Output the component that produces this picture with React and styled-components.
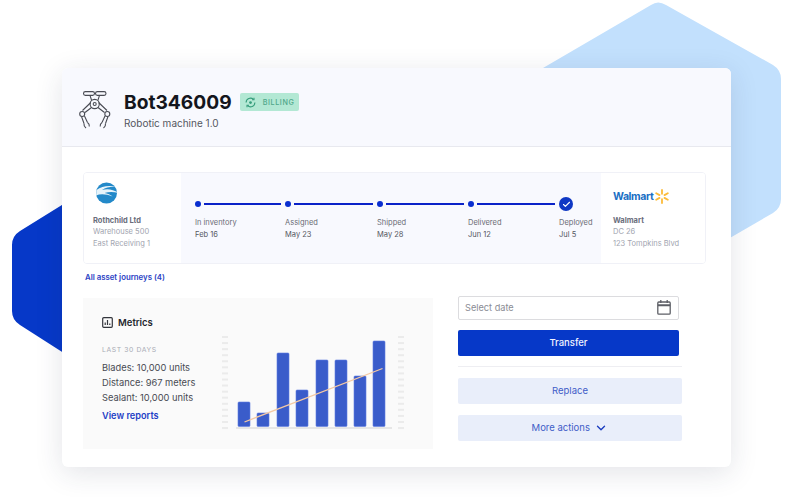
import React from "react";
import styled, { createGlobalStyle } from "styled-components";
import { Check, ChevronDown } from "lucide-react";

const GlobalStyle = createGlobalStyle`
  html, body { margin: 0; padding: 0; background: #fff; }
  body { font-family: Inter, "Liberation Sans", sans-serif; }
`;

const stops = [
  { label: "In inventory", date: "Feb 16" },
  { label: "Assigned", date: "May 23" },
  { label: "Shipped", date: "May 28" },
  { label: "Delivered", date: "Jun 12" },
  { label: "Deployed", date: "Jul 5", done: true },
];

const bars = [
  { x: 238, top: 402 },
  { x: 257, top: 413 },
  { x: 277, top: 353 },
  { x: 296, top: 390 },
  { x: 316, top: 360 },
  { x: 335, top: 360 },
  { x: 354, top: 376 },
  { x: 373, top: 341 },
];

const ticks = Array.from({ length: 16 }, (_, i) => 337 + i * 6.07);

function RobotIcon() {
  return (
    <RobotSvg width="32" height="38" viewBox="0 0 32 38" fill="none" stroke="#4a4c54" strokeWidth="1.1">
      <rect x="4.500" y=".6" width="11" height="3.800" rx="1.900" />
      <rect x="16.500" y=".6" width="10.500" height="3.800" rx="1.900" />
      <path d="M11 4.400 12.500 9M20.500 4.400 19 9" />
      <circle cx="15.700" cy="13" r="4.600" />
      <circle cx="15.700" cy="13" r="1.500" />
      <path d="M11.800 11.500 3.500 19.500M12.500 16.500 6 21.500M19.600 11.500 28 19.500M19 16.500 25.500 21.500" />
      <circle cx="3.200" cy="23" r="2.500" />
      <circle cx="28.300" cy="23" r="2.500" />
      <path d="M2.500 25.500 5 32.500M5.500 25 8.500 31.500M29 25.500 26.500 32.500M26 25 23 31.500" />
      <path d="M5 32.500c-.3 1.500.3 3 2 4.500M8.500 31.500c1.500 1 2 2.500 1.800 4M26.500 32.500c.3 1.500-.3 3-2 4.500M23 31.500c-1.500 1-2 2.500-1.800 4" />
    </RobotSvg>
  );
}

function SyncIcon() {
  return (
    <svg width="11" height="11" viewBox="0 0 12 12" fill="none" stroke="#359c7b" strokeWidth="1.200">
      <path d="M1.200 6a4.800 4.800 0 0 1 8-3.500M10.800 6a4.800 4.800 0 0 1-8 3.500" />
      <path d="M9.800 .8v2.200H7.600M2.200 11.200V9h2.200" />
      <circle cx="6" cy="6" r="1.500" fill="#359c7b" stroke="none" />
    </svg>
  );
}

function RothchildLogo() {
  return (
    <LogoSvg width="24" height="22" viewBox="0 0 24 22">
      <circle cx="11.500" cy="11" r="10.500" fill="#2389c9" />
      <path d="M1.500 8C7 3.500 15 3 22 5c-5-.5-11 0-15 3 5-1.500 11-1 16.500 3-5-1.500-10-1.500-14 0 3 .5 6 1.500 8 3.500-6-2.500-12-3-16.500-1C1.500 12 1 10 1.500 8z" fill="#e6f3fa" />
    </LogoSvg>
  );
}

function Spark() {
  return (
    <svg width="14" height="15" viewBox="0 0 14 15" stroke="#fcbb38" strokeWidth="1.800" strokeLinecap="round">
      <path d="M7 1v3.800M7 10.200V14M1.200 4.200l3.300 1.900M9.500 8.900l3.300 1.900M1.200 10.800l3.300-1.900M9.500 6.100l3.300-1.900" />
    </svg>
  );
}

function MetricsIcon() {
  return (
    <svg width="11" height="11" viewBox="0 0 11 11" fill="none" stroke="#33353c" strokeWidth="1.200">
      <rect x=".7" y=".7" width="9.600" height="9.600" rx="1" />
      <path d="M3.200 8V5.500M5.500 8V3M7.800 8V6.500" />
    </svg>
  );
}

function CalendarIcon() {
  return (
    <svg width="14" height="15" viewBox="0 0 14 15" fill="none" stroke="#5d5f66" strokeWidth="1.300">
      <rect x=".8" y="2" width="12.400" height="12.200" rx="1" />
      <path d="M.8 5.200h12.400" strokeWidth="2" />
      <path d="M3.800 0v3M10.200 0v3" />
    </svg>
  );
}

function BarChart() {
  return (
    <ChartSvg width="190" height="100" viewBox="218 332 190 100">
      {ticks.map((y) => (
        <g key={y} fill="#ebebeb">
          <rect x="222" y={y - 1} width="6" height="2" />
          <rect x="398" y={y - 1} width="6" height="2" />
        </g>
      ))}
      <rect x="236" y="427" width="156" height="2" fill="#e6e6e6" />
      {bars.map((b) => (
        <rect
          key={b.x}
          x={b.x}
          y={b.top}
          width="12"
          height={426.500 - b.top}
          rx="1"
          fill="#3a5cca"
          stroke="#5f7ce0"
          strokeWidth=".6"
        />
      ))}
      <path d="M244.500 422 382.500 368.500" stroke="#f5c9a3" strokeWidth="1.300" />
    </ChartSvg>
  );
}

export default function App() {
  return (
    <Page>
      <GlobalStyle />
      <Backdrop width="800" height="497" viewBox="0 0 800 497">
        <path
          d="M651 5Q658 0 666 5L773 65Q781 70 781 79V199Q781 208 773 213L640 290L543 68Z"
          fill="#c2e0fd"
        />
        <path d="M70 200 20 231Q12 236 12 245V311Q12 320 20 325L70 357Z" fill="#0638c8" />
      </Backdrop>
      <Card>
        <Header>
          <RobotIcon />
          <HeaderText>
            <TitleRow>
              <Title>Bot346009</Title>
              <Badge>
                <SyncIcon />
                BILLING
              </Badge>
            </TitleRow>
            <Subtitle>Robotic machine 1.0</Subtitle>
          </HeaderText>
        </Header>
        <Body>
          <Journey>
            <Site>
              <LogoSlot>
                <RothchildLogo />
              </LogoSlot>
              <SiteName>Rothchild Ltd</SiteName>
              <SiteLine>Warehouse 500</SiteLine>
              <SiteLine>East Receiving 1</SiteLine>
            </Site>
            <Track>
              {stops.map((stop, index) => (
                <Stop key={stop.label}>
                  <StopMark>
                    {stop.done ? (
                      <DoneDot>
                        <Check size={9} color="#fff" strokeWidth={3} />
                      </DoneDot>
                    ) : (
                      <Dot />
                    )}
                    {index < stops.length - 1 && <Line />}
                  </StopMark>
                  <StopLabel>{stop.label}</StopLabel>
                  <StopDate>{stop.date}</StopDate>
                </Stop>
              ))}
            </Track>
            <Site $right>
              <LogoSlot $right>
                <WalmartWord>Walmart</WalmartWord>
                <Spark />
              </LogoSlot>
              <SiteName>Walmart</SiteName>
              <SiteLine>DC 26</SiteLine>
              <SiteLine>123 Tompkins Blvd</SiteLine>
            </Site>
          </Journey>
          <JourneyLink>All asset journeys (4)</JourneyLink>
          <Lower>
            <Metrics>
              <MetricsText>
                <MetricsTitle>
                  <MetricsIcon />
                  Metrics
                </MetricsTitle>
                <Eyebrow>LAST 30 DAYS</Eyebrow>
                <MetricLine>Blades: 10,000 units</MetricLine>
                <MetricLine>Distance: 967 meters</MetricLine>
                <MetricLine>Sealant: 10,000 units</MetricLine>
                <ReportsLink>View reports</ReportsLink>
              </MetricsText>
              <BarChart />
            </Metrics>
            <Actions>
              <DateField>
                Select date
                <CalendarIcon />
              </DateField>
              <PrimaryButton>Transfer</PrimaryButton>
              <Divider />
              <SoftButton>Replace</SoftButton>
              <SoftButton>
                More actions
                <ChevronDown size={14} strokeWidth={2.400} color="#1d3fc0" />
              </SoftButton>
            </Actions>
          </Lower>
        </Body>
      </Card>
    </Page>
  );
}

const Page = styled.div`
  position: relative;
  width: 800px;
  height: 497px;
  padding: 68px 0 0 62px;
  box-sizing: border-box;
  overflow: hidden;
`;

const Backdrop = styled.svg`
  position: absolute;
  inset: 0;
`;

const Card = styled.div`
  position: relative;
  width: 669px;
  height: 399px;
  border-radius: 6px;
  background: #fff;
  box-shadow: 0 6px 28px rgba(40, 50, 80, 0.13);
  overflow: hidden;
`;

const Header = styled.div`
  display: flex;
  align-items: center;
  gap: 13px;
  height: 79px;
  padding-left: 17px;
  box-sizing: border-box;
  background: #f8f9fe;
  border-bottom: 1px solid #e8e9ef;
`;

const RobotSvg = styled.svg`
  flex: none;
  margin-top: 6px;
`;

const HeaderText = styled.div`
  display: flex;
  flex-direction: column;
  gap: 2px;
  padding-top: 6px;
`;

const TitleRow = styled.div`
  display: flex;
  align-items: center;
  gap: 8px;
`;

const Title = styled.div`
  font-size: 19.200px;
  font-weight: 700;
  line-height: 24px;
  color: #14161d;
`;

const Badge = styled.div`
  display: flex;
  align-items: center;
  gap: 7px;
  height: 18px;
  padding: 0 5px;
  border-radius: 2px;
  background: #b3e8d4;
  color: #4ea68a;
  font-size: 7.200px;
  font-weight: 500;
  letter-spacing: 0.6px;
`;

const Subtitle = styled.div`
  font-size: 10px;
  line-height: 14px;
  color: #55575f;
`;

const Body = styled.div`
  padding: 25px 25px 0 21px;
`;

const Journey = styled.div`
  display: grid;
  grid-template-columns: 97px 420px 104px;
  height: 92px;
  box-sizing: border-box;
  border: 1px solid #f0f1f7;
  border-radius: 4px;
  overflow: hidden;
`;

const Site = styled.div`
  padding: ${(p) => (p.$right ? "11px 0 0 12px" : "8px 0 0 9px")};
  background: #fff;
`;

const LogoSlot = styled.div`
  display: flex;
  align-items: center;
  gap: 2px;
  height: 24px;
  margin-bottom: ${(p) => (p.$right ? "6.500px" : "9.500px")};
`;

const LogoSvg = styled.svg`
  margin-left: 2px;
`;

const WalmartWord = styled.span`
  font-size: 10.500px;
  font-weight: 700;
  letter-spacing: -0.4px;
  color: #1a6fc4;
`;

const SiteName = styled.div`
  font-size: 7.500px;
  font-weight: 700;
  line-height: 11.500px;
  color: #6a6e7c;
`;

const SiteLine = styled.div`
  font-size: 7.500px;
  line-height: 11.500px;
  color: #a2a5b0;
`;

const Track = styled.div`
  display: grid;
  grid-template-columns: 90px 92px 91px 91px 1fr;
  padding: 24px 0 0 14px;
  background: #f8f9fe;
`;

const Stop = styled.div`
  display: flex;
  flex-direction: column;
`;

const StopMark = styled.div`
  display: flex;
  align-items: center;
  height: 14px;
  margin-bottom: 6px;
`;

const Dot = styled.div`
  flex: none;
  width: 6px;
  height: 6px;
  border-radius: 50%;
  background: #0a2fd0;
`;

const DoneDot = styled.div`
  display: flex;
  flex: none;
  align-items: center;
  justify-content: center;
  width: 14px;
  height: 14px;
  border-radius: 50%;
  background: #0f38c4;
`;

const Line = styled.div`
  flex: 1;
  height: 2px;
  margin: 0 4px 0 3px;
  background: #0a22c8;
`;

const StopLabel = styled.div`
  font-size: 7.500px;
  line-height: 11px;
  color: #6a6c75;
`;

const StopDate = styled.div`
  margin-top: 1px;
  font-size: 7.500px;
  line-height: 11px;
  color: #55575f;
`;

const JourneyLink = styled.div`
  margin: 8px 0 0 2px;
  font-size: 7.800px;
  font-weight: 600;
  line-height: 11px;
  color: #2a3fc4;
`;

const Lower = styled.div`
  display: flex;
  align-items: flex-start;
  gap: 25px;
  margin-top: 15px;
`;

const Metrics = styled.div`
  display: flex;
  width: 350px;
  height: 151px;
  box-sizing: border-box;
  padding: 17px 0 0 19px;
  background: #fafafa;
`;

const MetricsText = styled.div`
  flex: none;
  width: 116px;
`;

const MetricsTitle = styled.div`
  display: flex;
  align-items: center;
  gap: 5px;
  height: 14px;
  font-size: 9.500px;
  font-weight: 600;
  color: #25272e;
`;

const Eyebrow = styled.div`
  margin-top: 15px;
  margin-bottom: 5px;
  font-size: 6.800px;
  line-height: 11px;
  letter-spacing: 0.6px;
  color: #a8abb5;
`;

const MetricLine = styled.div`
  font-size: 9.300px;
  line-height: 15px;
  color: #484a52;
`;

const ReportsLink = styled.div`
  margin-top: 3px;
  font-size: 9.200px;
  font-weight: 600;
  line-height: 15px;
  color: #1f3fc6;
`;

const ChartSvg = styled.svg`
  flex: none;
  margin: 17px 0 0 0;
`;

const Actions = styled.div`
  display: flex;
  flex-direction: column;
  width: 224px;
  margin-top: -2px;
`;

const DateField = styled.div`
  display: flex;
  align-items: center;
  justify-content: space-between;
  width: 221px;
  height: 24px;
  box-sizing: border-box;
  padding: 0 7px 1px 6px;
  border: 1px solid #dcdcdf;
  border-radius: 2px;
  background: #fff;
  font-size: 9.200px;
  color: #8a8c94;
`;

const PrimaryButton = styled.div`
  display: flex;
  align-items: center;
  justify-content: center;
  width: 221px;
  height: 26px;
  box-sizing: border-box;
  padding-bottom: 1px;
  margin-top: 10px;
  border-radius: 2px;
  background: #0638c8;
  font-size: 9.500px;
  font-weight: 500;
  color: #f2f4ff;
`;

const Divider = styled.div`
  height: 1px;
  margin: 10px 0 11px;
  background: #eeeef2;
`;

const SoftButton = styled.div`
  display: flex;
  align-items: center;
  justify-content: center;
  gap: 4.500px;
  height: 26px;
  box-sizing: border-box;
  padding-bottom: 1px;
  margin-bottom: 11px;
  border-radius: 2px;
  background: #e9eefa;
  font-size: 9.500px;
  color: #3f5dc8;
`;
